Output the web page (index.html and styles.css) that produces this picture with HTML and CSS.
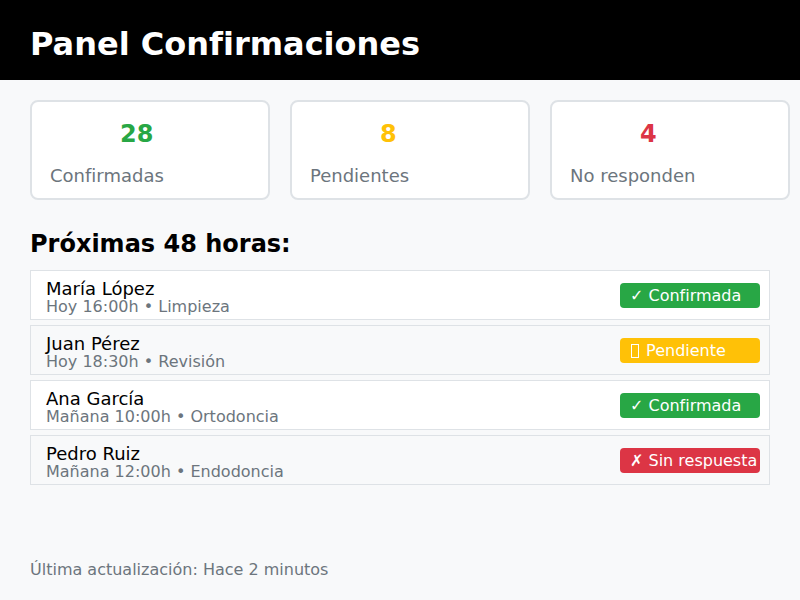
FILE: index.html
```html
<!DOCTYPE html>
<html lang="es">
<head>
<meta charset="utf-8">
<title>Panel Confirmaciones</title>
<link rel="stylesheet" href="styles.css">
</head>
<body>
<header class="topbar">
  <h1 class="title">Panel Confirmaciones</h1>
</header>
<main class="content">
  <section class="stats">
    <div class="stat">
      <div class="stat-num green">28</div>
      <div class="stat-label">Confirmadas</div>
    </div>
    <div class="stat">
      <div class="stat-num yellow">8</div>
      <div class="stat-label">Pendientes</div>
    </div>
    <div class="stat">
      <div class="stat-num red">4</div>
      <div class="stat-label">No responden</div>
    </div>
  </section>

  <h2 class="section-title">Próximas 48 horas:</h2>

  <ul class="list">
    <li class="row">
      <div class="info">
        <div class="name">María López</div>
        <div class="meta">Hoy 16:00h • Limpieza</div>
      </div>
      <span class="badge badge-green">✓ Confirmada</span>
    </li>
    <li class="row alt">
      <div class="info">
        <div class="name">Juan Pérez</div>
        <div class="meta">Hoy 18:30h • Revisión</div>
      </div>
      <span class="badge badge-yellow"><span class="tofu" title="⏳"></span> Pendiente</span>
    </li>
    <li class="row">
      <div class="info">
        <div class="name">Ana García</div>
        <div class="meta">Mañana 10:00h • Ortodoncia</div>
      </div>
      <span class="badge badge-green">✓ Confirmada</span>
    </li>
    <li class="row alt">
      <div class="info">
        <div class="name">Pedro Ruiz</div>
        <div class="meta">Mañana 12:00h • Endodoncia</div>
      </div>
      <span class="badge badge-red">✗ Sin respuesta</span>
    </li>
  </ul>

  <p class="footer">Última actualización: Hace 2 minutos</p>
</main>
</body>
</html>
```

FILE: styles.css
```css
* { box-sizing: border-box; }

body {
  margin: 0;
  background: #f8f9fa;
  font-family: "DejaVu Sans", sans-serif;
  color: #000;
}

.topbar {
  background: #000;
  height: 80px;
  padding: 25px 30px 0;
}

.title {
  margin: 0;
  color: #fff;
  font-size: 32px;
  font-weight: bold;
  line-height: normal;
}

.content {
  padding: 20px 30px;
}

.stats {
  display: flex;
  gap: 20px;
}

.stat {
  flex: 0 0 240px;
  height: 100px;
  background: #fff;
  border: 2px solid #dee2e6;
  border-radius: 8px;
  padding: 18px 18px 0;
}

.stat-num {
  font-size: 24px;
  font-weight: bold;
  line-height: 28px;
  margin-left: 70px;
}

.green { color: #28a745; }
.yellow { color: #ffc107; }
.red { color: #dc3545; }

.stat-label {
  margin-top: 17px;
  font-size: 18px;
  line-height: 21px;
  color: #6c757d;
}

.section-title {
  margin: 30px 0 12px;
  font-size: 24px;
  font-weight: bold;
  line-height: normal;
}

.list {
  list-style: none;
  margin: 0;
  padding: 0;
  display: flex;
  flex-direction: column;
  gap: 5px;
}

.row {
  display: flex;
  justify-content: space-between;
  align-items: center;
  height: 50px;
  padding: 0 9px 0 15px;
  background: #fff;
  border: 1px solid #dee2e6;
}

.row.alt { background: #f8f9fa; }

.info { padding-top: 6px; }

.name {
  font-size: 18px;
  line-height: 18px;
}

.meta {
  font-size: 16px;
  line-height: 18px;
  color: #6c757d;
}

.badge {
  width: 140px;
  height: 25px;
  padding: 0 10px;
  border-radius: 4px;
  color: #fff;
  font-size: 16px;
  line-height: 25px;
  white-space: nowrap;
  overflow: hidden;
}

.tofu {
  display: inline-block;
  width: 8px;
  height: 14px;
  margin: 0 2px 0 1px;
  border: 1px solid #fff;
  vertical-align: -2px;
}

.badge-green { background: #28a745; }
.badge-yellow { background: #ffc107; }
.badge-red { background: #dc3545; }

.footer {
  margin: 75px 0 0;
  font-size: 16px;
  line-height: normal;
  color: #6c757d;
}
```
